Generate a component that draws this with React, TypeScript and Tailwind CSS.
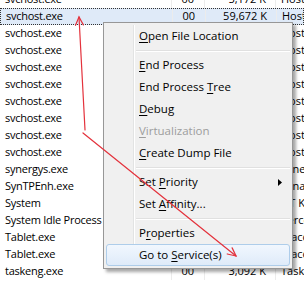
import React from "react";

type Row = { name: string; cpu: string; mem: string; desc: string; sel?: boolean };

const HOST = "Host Process for Windows Services";
const rows: Row[] = [
  { name: "svchost.exe", cpu: "00", mem: "5,172 K", desc: HOST },
  { name: "svchost.exe", cpu: "00", mem: "59,672 K", desc: HOST, sel: true },
  { name: "svchost.exe", cpu: "00", mem: "2,148 K", desc: HOST },
  { name: "svchost.exe", cpu: "00", mem: "8,904 K", desc: HOST },
  { name: "svchost.exe", cpu: "00", mem: "1,520 K", desc: HOST },
  { name: "svchost.exe", cpu: "00", mem: "3,316 K", desc: HOST },
  { name: "svchost.exe", cpu: "00", mem: "4,212 K", desc: HOST },
  { name: "svchost.exe", cpu: "00", mem: "1,904 K", desc: HOST },
  { name: "svchost.exe", cpu: "00", mem: "2,556 K", desc: HOST },
  { name: "svchost.exe", cpu: "00", mem: "6,028 K", desc: HOST },
  { name: "synergys.exe", cpu: "00", mem: "1,736 K", desc: "Synergy Server" },
  { name: "SynTPEnh.exe", cpu: "00", mem: "3,480 K", desc: "Synaptics TouchPad Enhancements" },
  { name: "System", cpu: "01", mem: "52 K", desc: "NT Kernel & System" },
  { name: "System Idle Process", cpu: "96", mem: "24 K", desc: "Percentage of time the processor is idle" },
  { name: "Tablet.exe", cpu: "00", mem: "2,212 K", desc: "Wacom Tablet Service" },
  { name: "Tablet.exe", cpu: "00", mem: "1,648 K", desc: "Wacom Tablet Service" },
  { name: "taskeng.exe", cpu: "00", mem: "3,092 K", desc: "Task Scheduler Engine" },
];

type Item =
  | { sep: true }
  | { sep?: false; pre: string; u: string; post: string; disabled?: boolean; sub?: boolean; hot?: boolean };

const items: Item[] = [
  { pre: "", u: "O", post: "pen File Location" },
  { sep: true },
  { pre: "", u: "E", post: "nd Process" },
  { pre: "End Process ", u: "T", post: "ree" },
  { pre: "", u: "D", post: "ebug" },
  { pre: "", u: "V", post: "irtualization", disabled: true },
  { pre: "", u: "C", post: "reate Dump File" },
  { sep: true },
  { pre: "Set ", u: "P", post: "riority", sub: true },
  { pre: "Set ", u: "A", post: "ffinity..." },
  { sep: true },
  { pre: "P", u: "r", post: "operties" },
  { pre: "Go to ", u: "S", post: "ervice(s)", hot: true },
];

function Arrow({ x1, y1, x2, y2 }: { x1: number; y1: number; x2: number; y2: number }) {
  const a = Math.atan2(y2 - y1, x2 - x1);
  const len = 9;
  const spread = 0.45;
  const p1 = [x2 - len * Math.cos(a - spread), y2 - len * Math.sin(a - spread)];
  const p2 = [x2 - len * Math.cos(a + spread), y2 - len * Math.sin(a + spread)];
  return (
    <g stroke="#e4323c" strokeWidth={1.2} fill="none" strokeLinecap="round">
      <line x1={x1} y1={y1} x2={x2} y2={y2} />
      <polyline points={`${p1[0]},${p1[1]} ${x2},${y2} ${p2[0]},${p2[1]}`} />
    </g>
  );
}

export default function App() {
  return (
    <div className="relative w-[304px] h-[282px] overflow-hidden bg-white font-['Open_Sans',sans-serif] text-[11px] text-black">
      <div className="-mt-[9px] flex flex-col">
        {rows.map((r, i) => (
          <div
            key={i}
            className={
              "flex h-[17px] items-center whitespace-nowrap " +
              (r.sel ? "bg-[#dfeaf8] border border-dotted border-[#333]" : "")
            }
          >
            <div className="w-[101px] shrink-0 pl-[5px] tracking-[-0.25px]">{r.name}</div>
            <div className="w-[71px] shrink-0 self-stretch border-r border-[#ececec]" />
            <div className="w-[33px] shrink-0 self-stretch flex items-center justify-end pr-[10px] border-r border-[#ececec]">
              {r.cpu}
            </div>
            <div className="w-[71px] shrink-0 self-stretch flex items-center justify-end pr-[9px] border-r border-[#ececec]">
              {r.mem}
            </div>
            <div className="flex-1 pl-[5px] overflow-hidden">{r.desc}</div>
          </div>
        ))}
      </div>

      <div className="absolute left-[103px] top-[22px] w-[190px] h-[247px] bg-[#f0f0f0] border border-[#979797] shadow-[3px_3px_3px_rgba(0,0,0,0.35)] py-[2px] px-[2px] font-['Open_Sans',sans-serif] text-[11.5px]">
        <div className="absolute left-[29px] top-[2px] bottom-[2px] w-px bg-[#e2e3e3]" />
        <div className="absolute left-[30px] top-[2px] bottom-[2px] w-px bg-white" />
        <div className="relative flex flex-col">
          {items.map((it, i) =>
            it.sep ? (
              <div key={i} className="h-[7px] flex flex-col justify-center pl-[30px]">
                <div className="h-px bg-[#e0e0e0]" />
                <div className="h-px bg-white" />
              </div>
            ) : (
              <div
                key={i}
                className={
                  "relative flex h-[22px] items-center pl-[32px] rounded-[3px] border " +
                  (it.hot
                    ? "border-[#aecdea] bg-gradient-to-b from-[#f1f7fe] to-[#dfebf9]"
                    : "border-transparent") +
                  (it.disabled ? " text-[#9d9d9d]" : " text-black")
                }
              >
                <span>
                  {it.pre}
                  <span className="underline underline-offset-2">{it.u}</span>
                  {it.post}
                </span>
                {it.sub && (
                  <svg className="absolute left-[171px] top-[7px]" width="4" height="7" viewBox="0 0 4 7">
                    <polygon points="0,0 4,3.5 0,7" fill="#000" />
                  </svg>
                )}
              </div>
            )
          )}
        </div>
      </div>

      <svg className="absolute inset-0 pointer-events-none" width="304" height="282">
        <Arrow x1={85} y1={130} x2={79} y2={17} />
        <Arrow x1={83} y1={133} x2={236} y2={256} />
      </svg>
    </div>
  );
}
